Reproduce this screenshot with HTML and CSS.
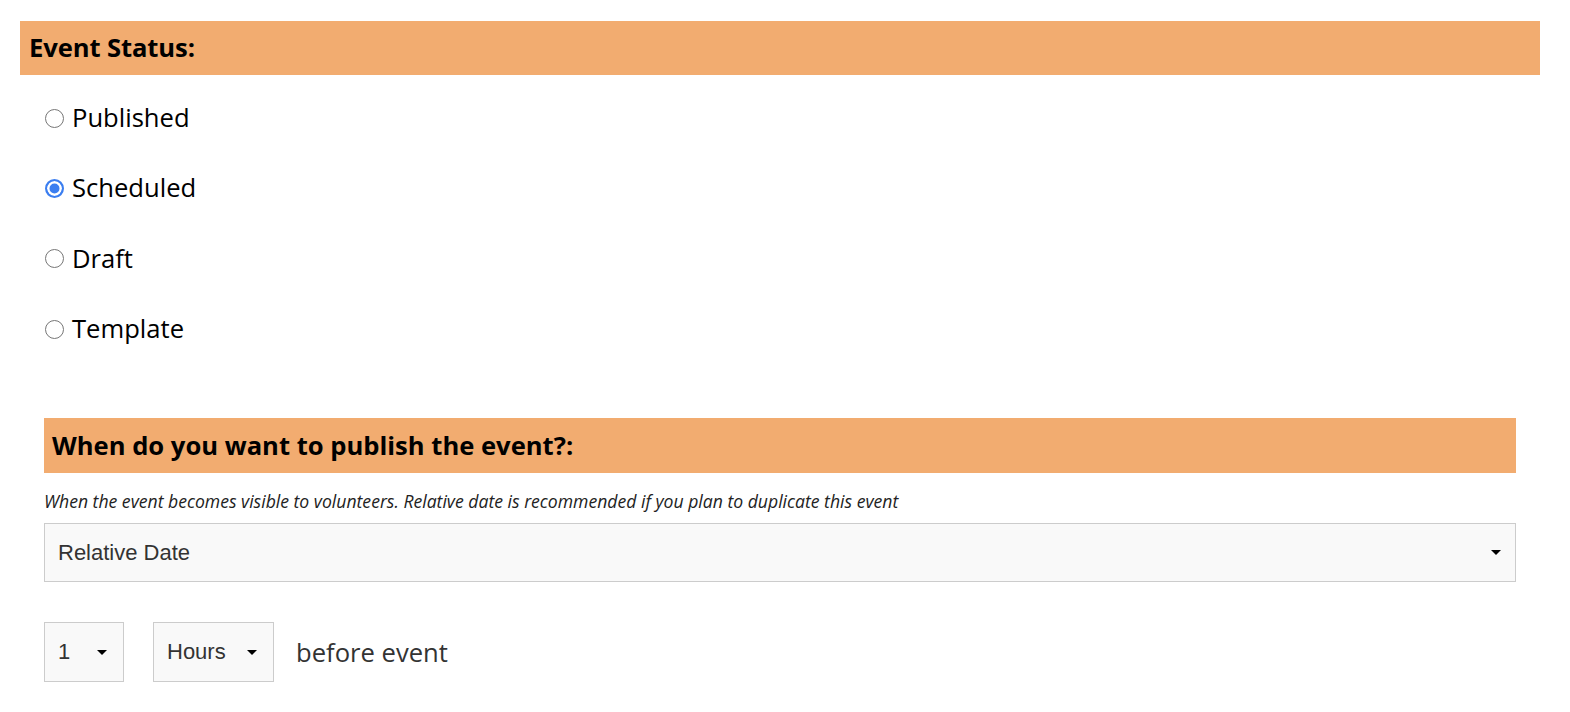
FILE: index.html
```html
<!DOCTYPE html>
<html lang="en">
<head>
<meta charset="utf-8">
<title>Event Status</title>
<link rel="stylesheet" href="styles.css">
</head>
<body>
<div class="page">
  <div class="section-head">Event Status:</div>
  <div class="inner">
    <div class="radios">
      <label class="radio-row"><span class="radio"></span><span class="radio-label">Published</span></label>
      <label class="radio-row"><span class="radio checked"></span><span class="radio-label">Scheduled</span></label>
      <label class="radio-row"><span class="radio"></span><span class="radio-label">Draft</span></label>
      <label class="radio-row"><span class="radio"></span><span class="radio-label">Template</span></label>
    </div>

    <div class="sub-head">When do you want to publish the event?:</div>
    <div class="hint">When the event becomes visible to volunteers. Relative date is recommended if you plan to duplicate this event</div>
    <div class="select select-wide"><span class="select-text">Relative Date</span><span class="caret"></span></div>

    <div class="relative-row">
      <div class="select select-num"><span class="select-text">1</span><span class="caret"></span></div>
      <div class="select select-unit"><span class="select-text">Hours</span><span class="caret"></span></div>
      <span class="after-text">before event</span>
    </div>
  </div>
</div>
</body>
</html>
```

FILE: styles.css
```css
html, body {
  margin: 0;
  padding: 0;
  background: #ffffff;
}

body {
  font-family: "Open Sans", "Noto Sans", sans-serif;
  color: #000;
}

.page {
  padding: 21px 30px 0 20px;
}

.section-head {
  background: #f2ac70;
  height: 54px;
  line-height: 54px;
  padding-left: 9px;
  font-size: 25.6px;
  font-weight: 700;
  letter-spacing: -0.1px;
}

.inner {
  padding: 0 24px;
}

.radios {
  display: flex;
  flex-direction: column;
  padding-top: 8px;
  margin-bottom: 54px;
}

.radio-row {
  display: flex;
  align-items: center;
  height: 70.33px;
}

.radio {
  box-sizing: border-box;
  width: 19px;
  height: 19px;
  border-radius: 50%;
  border: 1.5px solid #767676;
  margin-left: 1px;
  margin-right: 8px;
  background: #fff;
  flex: none;
}

.radio.checked {
  border: 2px solid #3b7ef0;
  background: #3b7ef0;
  box-shadow: inset 0 0 0 2.5px #fff;
}

.radio-label {
  font-size: 25.6px;
  line-height: 30px;
  color: #000;
}

.sub-head {
  background: #f2ac70;
  height: 55px;
  line-height: 55px;
  padding-left: 8px;
  font-size: 25.6px;
  font-weight: 700;
}

.hint {
  padding-top: 17px;
  line-height: 22px;
  font-size: 17.6px;
  font-style: italic;
  color: #222;
  margin-bottom: 11px;
}

.select {
  box-sizing: border-box;
  display: flex;
  align-items: center;
  justify-content: space-between;
  border: 1px solid #cccccc;
  background: #f9f9f9;
  padding: 0 16px 0 13px;
  font-family: "Liberation Sans", Arial, sans-serif;
  font-size: 22px;
  color: #333;
}

.select-wide {
  height: 59px;
  padding-right: 14px;
}

.caret {
  width: 0;
  height: 0;
  border-left: 5px solid transparent;
  border-right: 5px solid transparent;
  border-top: 5px solid #000;
  flex: none;
}

.relative-row {
  display: flex;
  align-items: center;
  margin-top: 40px;
}

.select-num {
  width: 80px;
  height: 60px;
}

.select-unit {
  width: 121px;
  height: 60px;
  margin-left: 29px;
}

.after-text {
  margin-left: 22px;
  font-size: 25.6px;
  color: #333;
}
```
